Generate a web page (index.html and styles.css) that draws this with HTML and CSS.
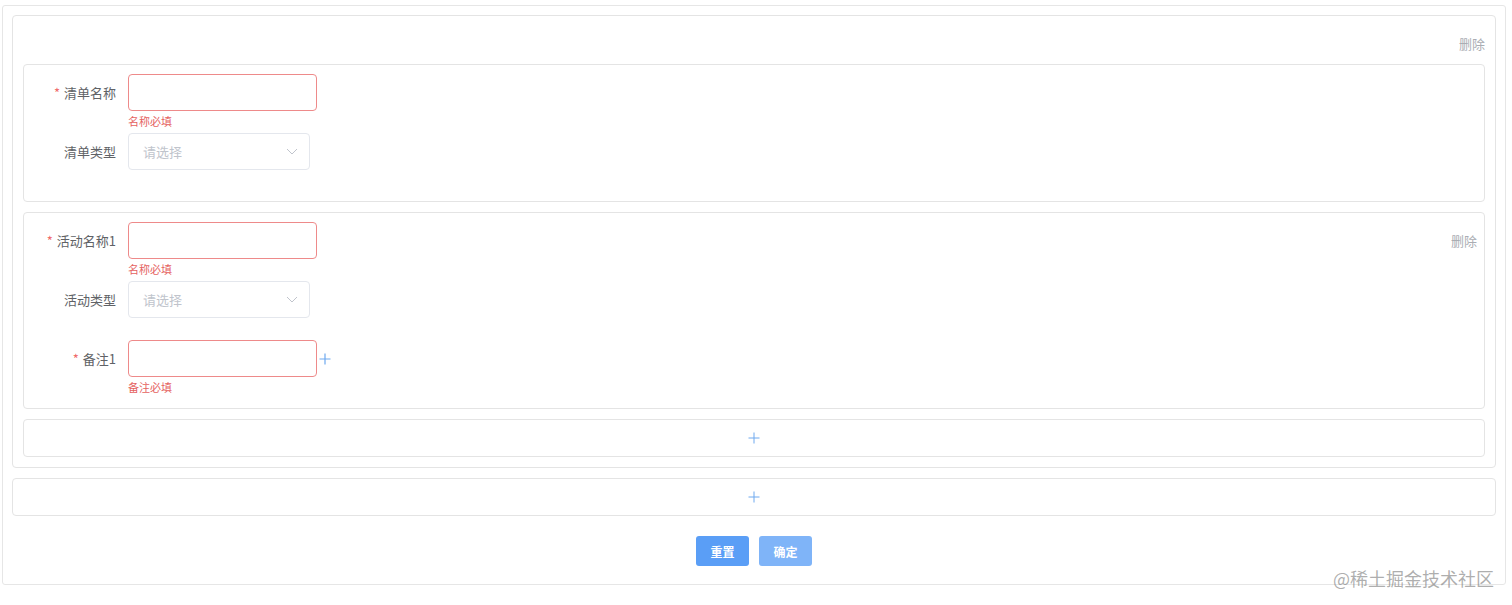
FILE: index.html
```html
<!DOCTYPE html>
<html lang="zh">
<head>
<meta charset="utf-8">
<link rel="stylesheet" href="styles.css">
</head>
<body>
<div class="page">
  <div class="outer-card">
    <div class="card-head"><span class="del">删除</span></div>
    <div class="inner-card">
      <div class="form-col">
        <div class="item">
          <label class="label"><span class="req">*</span>清单名称</label>
          <div class="control">
            <div class="input err"></div>
            <div class="error">名称必填</div>
          </div>
        </div>
        <div class="item">
          <label class="label">清单类型</label>
          <div class="control">
            <div class="select"><span class="ph">请选择</span>
              <svg class="arrow" width="12" height="7" viewBox="0 0 12 7"><path d="M1 1l5 5 5-5" fill="none" stroke="#c0c4cc" stroke-width="1"/></svg>
            </div>
          </div>
        </div>
      </div>
    </div>
    <div class="inner-card">
      <div class="form-col">
        <div class="item">
          <label class="label"><span class="req">*</span>活动名称1</label>
          <div class="control">
            <div class="input err"></div>
            <div class="error">名称必填</div>
          </div>
        </div>
        <div class="item">
          <label class="label">活动类型</label>
          <div class="control">
            <div class="select"><span class="ph">请选择</span>
              <svg class="arrow" width="12" height="7" viewBox="0 0 12 7"><path d="M1 1l5 5 5-5" fill="none" stroke="#c0c4cc" stroke-width="1"/></svg>
            </div>
          </div>
        </div>
        <div class="item">
          <label class="label"><span class="req">*</span>备注1</label>
          <div class="control">
            <div class="input err"></div>
            <div class="error">备注必填</div>
          </div>
          <svg class="plus-sm" width="12" height="12" viewBox="0 0 12 12"><path d="M6 0.5v11M0.5 6h11" stroke="#6ea9ef" stroke-width="1.2" fill="none"/></svg>
        </div>
      </div>
      <div class="side"><span class="del">删除</span></div>
    </div>
    <div class="add-card">
      <svg width="12" height="12" viewBox="0 0 12 12"><path d="M6 0.5v11M0.5 6h11" stroke="#6ea9ef" stroke-width="1" fill="none"/></svg>
    </div>
  </div>
  <div class="add-card outer-add">
    <svg width="12" height="12" viewBox="0 0 12 12"><path d="M6 0.5v11M0.5 6h11" stroke="#6ea9ef" stroke-width="1" fill="none"/></svg>
  </div>
  <div class="actions">
    <button class="btn btn-reset">重置</button>
    <button class="btn btn-ok">确定</button>
  </div>
</div>
<div class="watermark">@稀土掘金技术社区</div>
</body>
</html>
```

FILE: styles.css
```css
* { box-sizing: border-box; }
html, body { margin: 0; background: #fff; }
body {
  padding: 5px 6px 0 2px;
  font-family: "Noto Sans CJK SC", "Noto Sans", sans-serif;
  font-size: 13px;
  color: #606266;
}
.page {
  border: 1px solid #e6e6e6;
  border-radius: 3px;
  padding: 9px 9px 18px 9px;
}
.outer-card {
  border: 1px solid #e4e4e4;
  border-radius: 4px;
  padding: 10px;
  display: flex;
  flex-direction: column;
  gap: 10px;
}
.card-head {
  height: 28px;
  padding-top: 7px;
  display: flex;
  align-items: center;
  justify-content: flex-end;
}
.del {
  color: #aaadb3;
  font-size: 13px;
  line-height: 1;
}
.inner-card {
  border: 1px solid #e4e4e4;
  border-radius: 4px;
  padding: 9px 7px 9px 8px;
  display: flex;
  justify-content: space-between;
}
.form-col { display: flex; flex-direction: column; }
.item {
  display: flex;
  align-items: center;
  margin-bottom: 22px;
  position: relative;
}
.label {
  width: 96px;
  padding-right: 12px;
  text-align: right;
  line-height: 37px;
  color: #606266;
}
.req { color: #f06b6b; margin-right: 4px; }
.control { position: relative; }
.input {
  width: 189px;
  height: 37px;
  border: 1px solid #dcdfe6;
  border-radius: 4px;
  background: #fff;
}
.input.err { border-color: #ee8a8a; }
.error {
  position: absolute;
  left: 0;
  top: 40px;
  font-size: 11px;
  line-height: 14px;
  color: #e5625f;
}
.select {
  width: 182px;
  height: 37px;
  border: 1px solid #e4e7ed;
  border-radius: 4px;
  display: flex;
  align-items: center;
  justify-content: space-between;
  padding: 0 11px 0 14px;
}
.ph { color: #c0c4cc; font-size: 13px; }
.arrow { display: block; }
.plus-sm { margin-left: 2px; margin-top: 1px; }
.side {
  height: 37px;
  display: flex;
  align-items: center;
}
.add-card {
  height: 38px;
  border: 1px solid #e4e4e4;
  border-radius: 4px;
  display: flex;
  align-items: center;
  justify-content: center;
}
.add-card svg { display: block; }
.outer-add { margin-top: 10px; }
.actions {
  margin-top: 20px;
  display: flex;
  justify-content: center;
  gap: 10px;
}
.btn {
  width: 53px;
  height: 30px;
  border: none;
  border-radius: 3px;
  color: #fff;
  font-family: "Noto Sans CJK SC", sans-serif;
  font-size: 12px;
  font-weight: 700;
  padding: 0;
}
.btn-reset { background: #5a9ef6; }
.btn-ok { background: #7fb4f8; }
.watermark {
  position: absolute;
  right: 18px;
  top: 565px;
  font-size: 18px;
  color: rgba(120, 120, 120, 0.6);
  font-family: "Noto Sans CJK SC", sans-serif;
}
```
